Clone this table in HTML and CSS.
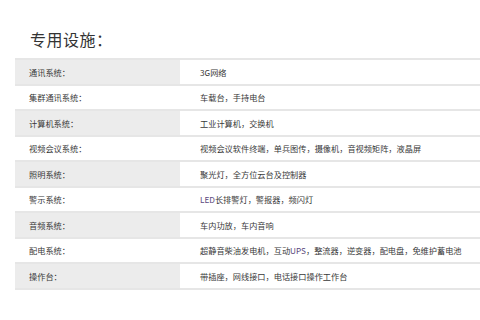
FILE: index.html
```html
<!DOCTYPE html>
<html lang="zh-CN">
<head>
<meta charset="utf-8">
<link rel="stylesheet" href="styles.css">
</head>
<body>
<div class="page">
  <h2 class="title">专用设施：</h2>
  <table class="spec">
    <tr class="odd"><td class="k">通讯系统：</td><td class="v">3G网络</td></tr>
    <tr><td class="k">集群通讯系统：</td><td class="v">车载台，手持电台</td></tr>
    <tr class="odd"><td class="k">计算机系统：</td><td class="v">工业计算机，交换机</td></tr>
    <tr><td class="k">视频会议系统：</td><td class="v">视频会议软件终端，单兵图传，摄像机，音视频矩阵，液晶屏</td></tr>
    <tr class="odd"><td class="k">照明系统：</td><td class="v">聚光灯，全方位云台及控制器</td></tr>
    <tr><td class="k">警示系统：</td><td class="v"><span class="lat">LED</span>长排警灯，警报器，频闪灯</td></tr>
    <tr class="odd"><td class="k">音频系统：</td><td class="v">车内功放，车内音响</td></tr>
    <tr><td class="k">配电系统：</td><td class="v">超静音柴油发电机，互动<span class="lat">UPS</span>，整流器，逆变器，配电盘，免维护蓄电池</td></tr>
    <tr class="odd"><td class="k">操作台：</td><td class="v">带插座，网线接口，电话接口操作工作台</td></tr>
  </table>
</div>
</body>
</html>
```
FILE: styles.css
```css
html, body {
  margin: 0;
  padding: 0;
  background: #ffffff;
}
.page {
  padding: 29px 0 0 15px;
  font-family: "Noto Sans CJK SC", "Noto Sans", sans-serif;
  color: #444;
}
.title {
  margin: 0 0 9px 15px;
  font-size: 16px;
  font-weight: normal;
  line-height: 20px;
  color: #333;
  letter-spacing: 0.5px;
}
.spec {
  width: 465px;
  border-collapse: collapse;
  font-size: 8.2px;
  color: #383838;
}
.spec tr {
  height: 25.5px;
  border-top: 2px solid #e6e6e6;
}
.spec tr:last-child {
  border-bottom: 2px solid #e6e6e6;
}
.spec td {
  padding: 0;
  vertical-align: middle;
}
.spec .k {
  width: 151px;
  padding-left: 14px;
}
.spec .v {
  padding-left: 20px;
}
.spec .odd .k {
  background: #ececec;
}
.lat {
  color: #5b4a7e;
}
```
